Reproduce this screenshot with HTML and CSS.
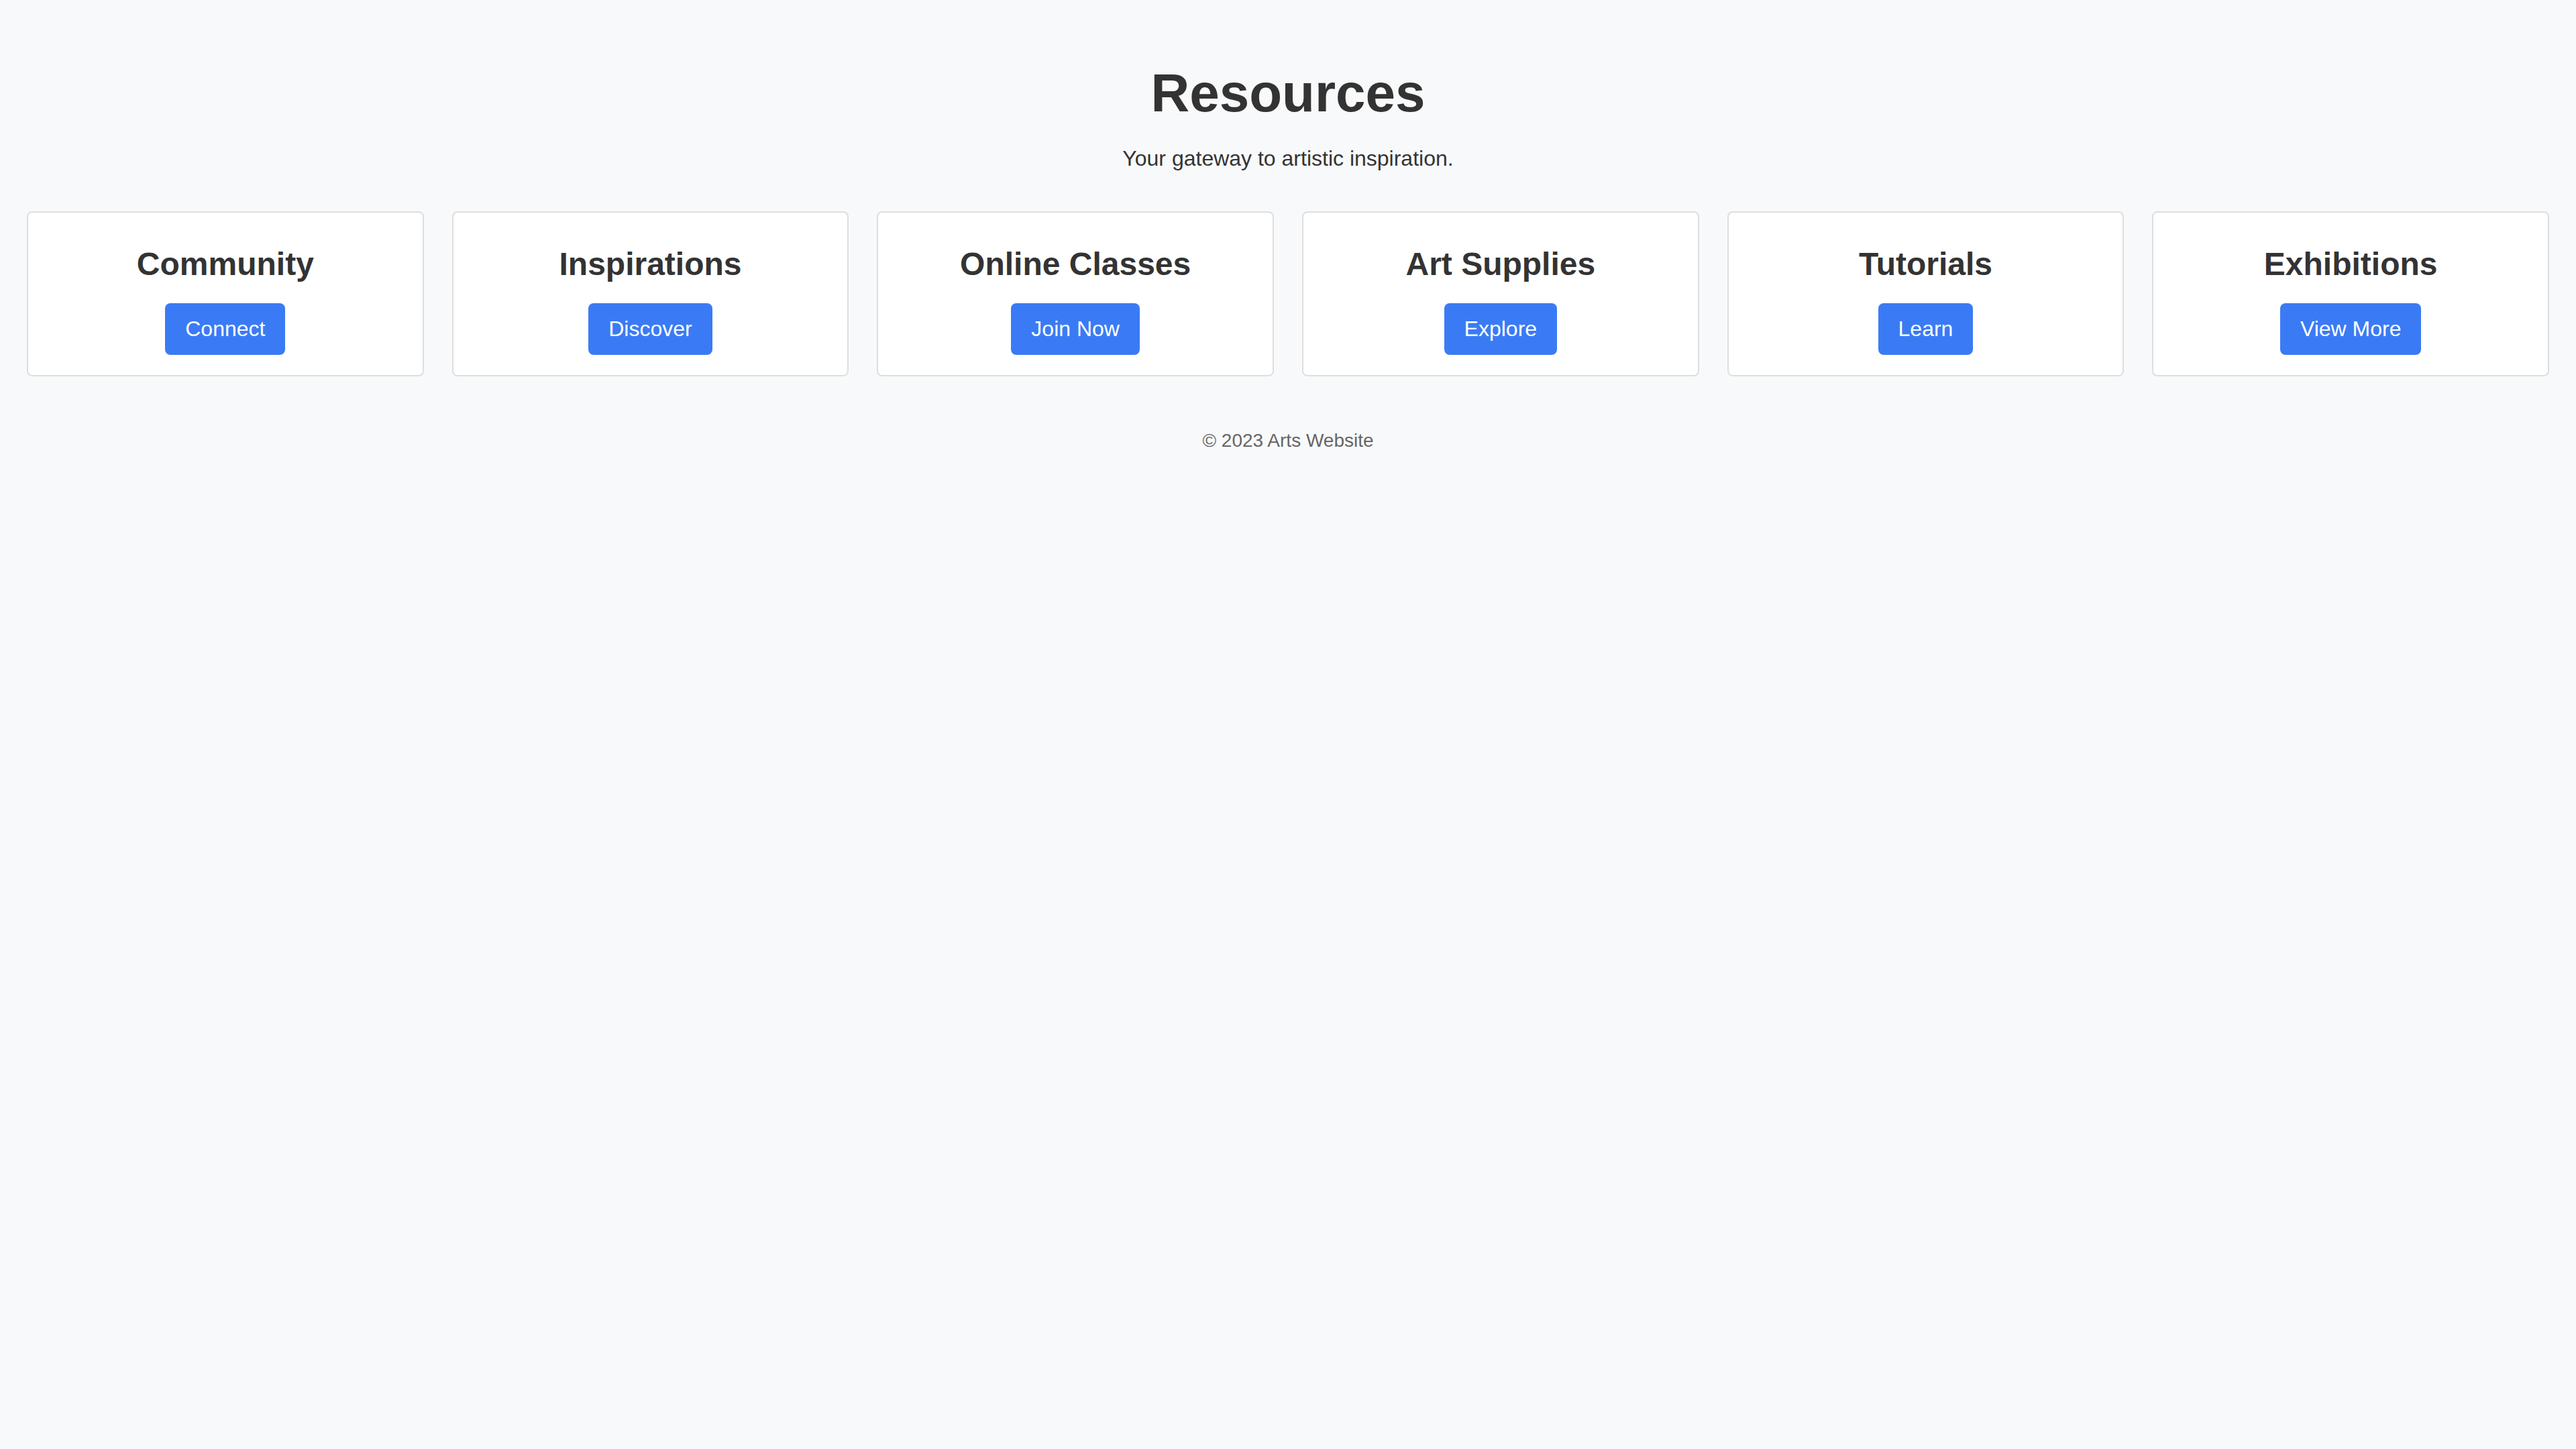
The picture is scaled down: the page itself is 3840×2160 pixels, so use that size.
FILE: index.html
```html
<!DOCTYPE html>
<html lang="en">
<head>
<meta charset="utf-8">
<title>Resources</title>
<link rel="stylesheet" href="styles.css">
</head>
<body>
<header class="page-header">
  <h1 class="title">Resources</h1>
  <p class="subtitle">Your gateway to artistic inspiration.</p>
</header>
<main class="cards">
  <section class="card">
    <h2 class="card-title">Community</h2>
    <a class="btn" href="#">Connect</a>
  </section>
  <section class="card">
    <h2 class="card-title">Inspirations</h2>
    <a class="btn" href="#">Discover</a>
  </section>
  <section class="card">
    <h2 class="card-title">Online Classes</h2>
    <a class="btn" href="#">Join Now</a>
  </section>
  <section class="card">
    <h2 class="card-title">Art Supplies</h2>
    <a class="btn" href="#">Explore</a>
  </section>
  <section class="card">
    <h2 class="card-title">Tutorials</h2>
    <a class="btn" href="#">Learn</a>
  </section>
  <section class="card">
    <h2 class="card-title">Exhibitions</h2>
    <a class="btn" href="#">View More</a>
  </section>
</main>
<footer class="page-footer">
  <p class="copyright">© 2023 Arts Website</p>
</footer>
</body>
</html>
```
FILE: styles.css
```css
* { box-sizing: border-box; }
html, body {
  margin: 0;
  padding: 0;
  background: #f8f9fa;
  font-family: "Liberation Sans", Arial, sans-serif;
  color: #333;
}
.page-header {
  text-align: center;
  padding-top: 93px;
}
.title {
  margin: 0;
  font-size: 80px;
  font-weight: bold;
  line-height: normal;
  color: #333;
}
.subtitle {
  margin: 33px 0 0;
  font-size: 32px;
  line-height: normal;
  color: #333;
}
.cards {
  display: grid;
  grid-template-columns: repeat(6, 1fr);
  gap: 42px;
  padding: 0 40px;
  margin-top: 60px;
}
.card {
  background: #fff;
  border: 2px solid #dedede;
  border-radius: 8px;
  padding: 30px 30px 30px;
  display: flex;
  flex-direction: column;
  align-items: center;
  text-align: center;
}
.card-title {
  margin: 19px 0 31px;
  font-size: 48px;
  font-weight: bold;
  line-height: normal;
  color: #333;
}
.btn {
  display: inline-block;
  background: #3a7bf5;
  color: #fff;
  text-decoration: none;
  font-size: 32px;
  line-height: normal;
  padding: 20px 30px;
  border-radius: 8px;
}
.page-footer {
  text-align: center;
  margin-top: 80px;
}
.copyright {
  margin: 0;
  font-size: 28px;
  line-height: normal;
  color: #666;
}
```
